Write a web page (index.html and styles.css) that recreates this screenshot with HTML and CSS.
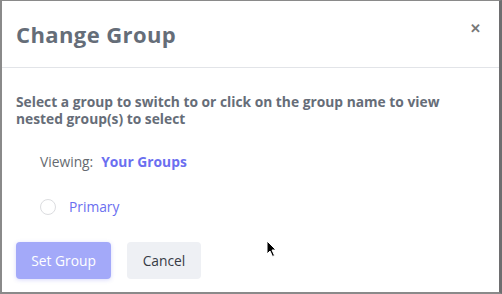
FILE: index.html
```html
<!DOCTYPE html>
<html>
<head>
<meta charset="utf-8">
<link rel="stylesheet" href="styles.css">
</head>
<body>
<div class="modal">
  <div class="header">
    <h1 class="title">Change Group</h1>
    <span class="close">&#x2715;</span>
  </div>
  <div class="body">
    <p class="desc">Select a group to switch to or click on the group name to view nested group(s) to select</p>
    <div class="viewing"><span class="label">Viewing:</span><span class="crumb">Your Groups</span></div>
    <label class="option"><span class="radio"></span><span class="opt-name">Primary</span></label>
    <div class="actions">
      <button class="btn primary">Set Group</button>
      <button class="btn secondary">Cancel</button>
    </div>
  </div>
  <svg class="cursor" width="12" height="18" viewBox="0 0 12 18"><path d="M1 1 L1 14 L4 11 L6.5 16.5 L8.5 15.5 L6 10 L10 10 Z" fill="#000" stroke="#fff" stroke-width="1"/></svg>
</div>
</body>
</html>
```

FILE: styles.css
```css
html, body { margin: 0; padding: 0; background: #fff; }
body { width: 502px; height: 294px; overflow: hidden; font-family: "Open Sans", Lato, sans-serif; }
.modal {
  position: relative;
  box-sizing: border-box;
  width: 502px; height: 294px;
  border-top: 1px solid #8a8a8a;
  border-left: 2px solid #8a8a8a;
  border-right: 3px solid #6e6e70;
  border-bottom: 2px solid #8a8a8a;
  background: #fff;
}
.header {
  display: flex; align-items: center; justify-content: space-between;
  height: 66px;
  border-bottom: 1px solid #e2e4e8;
  padding: 0 18px 0 14px;
}
.title { margin: 0; font-size: 22px; font-weight: 700; color: #656d78; letter-spacing: 0.4px; }
.close { font-size: 13px; font-weight: 700; color: #777; margin-top: -13px; }
.body { padding: 25px 14px 0 14px; }
.desc { margin: 0; max-width: 440px; font-size: 13.8px; font-weight: 700; color: #666d78; line-height: 17px; }
.viewing { margin: 26px 0 0 24px; font-size: 13.8px; display: flex; gap: 8px; line-height: 18px; }
.label { color: #666a70; }
.crumb { color: #6b6ff0; font-weight: 700; }
.option { display: flex; align-items: center; margin: 26px 0 0 24px; gap: 13px; }
.radio { width: 14px; height: 14px; border: 1px solid #dcdde0; border-radius: 50%; }
.opt-name { color: #6b6ff0; font-size: 13.8px; }
.actions { display: flex; gap: 16px; margin-top: 26px; }
.btn { font-family: inherit; font-size: 13.8px; border: none; border-radius: 4px; height: 37px; padding: 0; }
.primary { background: #a3a9f9; color: #fff; box-shadow: 0 1px 4px rgba(99,102,241,0.25); width: 95px; }
.secondary { background: #eef0f4; color: #363b45; width: 74px; }
.cursor { position: absolute; left: 264px; top: 239px; }
```
